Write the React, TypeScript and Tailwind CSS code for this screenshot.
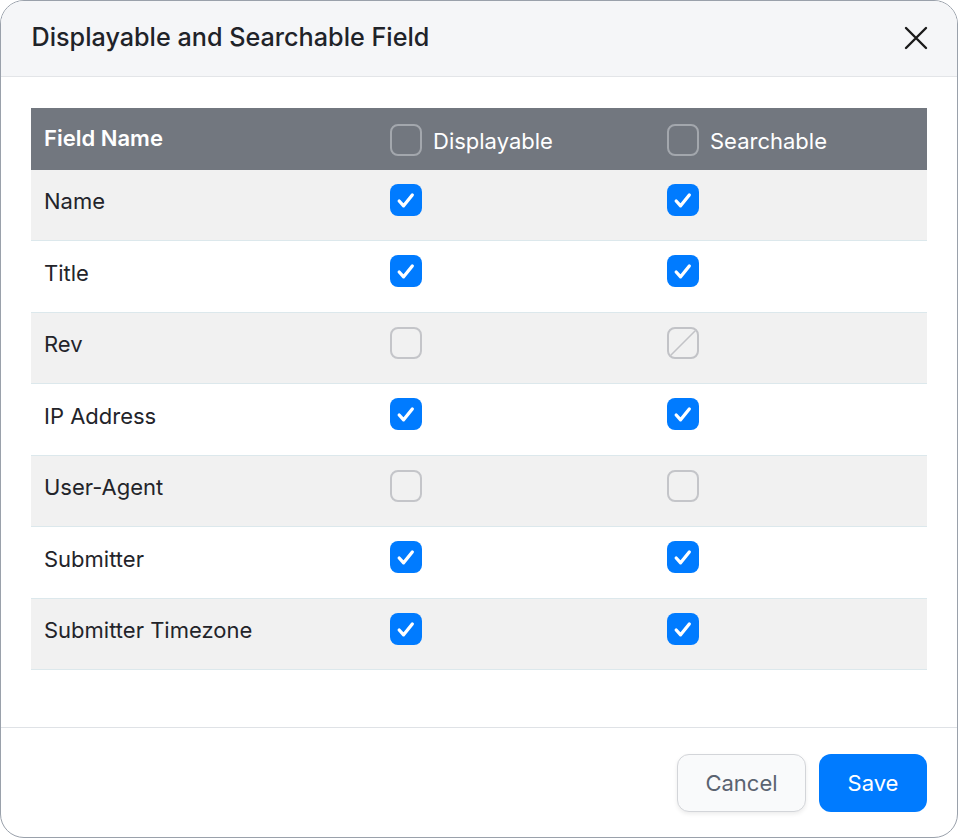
import React from "react";

type State = "on" | "off" | "disabled";

const rows: { name: string; d: State; s: State }[] = [
  { name: "Name", d: "on", s: "on" },
  { name: "Title", d: "on", s: "on" },
  { name: "Rev", d: "off", s: "disabled" },
  { name: "IP Address", d: "on", s: "on" },
  { name: "User-Agent", d: "off", s: "off" },
  { name: "Submitter", d: "on", s: "on" },
  { name: "Submitter Timezone", d: "on", s: "on" },
];

function Box({ state }: { state: State }) {
  if (state === "on") {
    return (
      <div className="w-[32px] h-[32px] rounded-[8px] bg-[#007bff] shrink-0">
        <svg width="32" height="32" viewBox="0 0 32 32" fill="none">
          <path d="M9.2 17 L13.6 21.8 L22.3 11" stroke="white" strokeWidth="3.3" strokeLinecap="round" strokeLinejoin="round" />
        </svg>
      </div>
    );
  }
  if (state === "disabled") {
    return (
      <div className="w-[32px] h-[32px] rounded-[8px] border-[2px] border-[#c2c3c7] shrink-0 overflow-hidden">
        <svg width="28" height="28" viewBox="0 0 28 28" fill="none">
          <line x1="1" y1="27" x2="27" y2="1" stroke="#c2c3c7" strokeWidth="1.6" />
        </svg>
      </div>
    );
  }
  return <div className="w-[32px] h-[32px] rounded-[8px] border-[2px] border-[#c4c5c9] shrink-0" />;
}

export default function App() {
  return (
    <div
      className="w-[958px] h-[838px] border border-[#9aa1ab] rounded-[24px] overflow-hidden flex flex-col bg-white"
      style={{ fontFamily: "Inter, 'Noto Sans', sans-serif" }}
    >
      <div className="h-[76px] shrink-0 bg-[#f5f6f8] border-b border-[#e3e5e8] pl-[30.5px] pr-[29px] flex items-center justify-between">
        <div className="text-[25.2px] font-medium text-[#1f2329] pb-[1px]">Displayable and Searchable Field</div>
        <svg className="mb-[2px]" width="24" height="24" viewBox="0 0 24 24" fill="none">
          <path d="M2 2 L22 22 M22 2 L2 22" stroke="#1a1a1a" strokeWidth="2.4" strokeLinecap="round" />
        </svg>
      </div>

      <div className="flex-1 px-[30px] pt-[31px]">
        <div className="w-[896px]">
          <div className="h-[61.5px] bg-[#72777f] grid grid-cols-[346px_277px_1fr] text-white">
            <div className="pl-[13px] flex items-center text-[22px] font-semibold">Field Name</div>
            <div className="pl-[13px] flex items-center pt-[2px] gap-[11px]">
              <div className="w-[32px] h-[32px] rounded-[8px] border-[2px] border-[#a3a7ad] shrink-0" />
              <span className="text-[22px] pt-[3px]">Displayable</span>
            </div>
            <div className="pl-[13px] flex items-center pt-[2px] gap-[11px]">
              <div className="w-[32px] h-[32px] rounded-[8px] border-[2px] border-[#a3a7ad] shrink-0" />
              <span className="text-[22px] pt-[3px]">Searchable</span>
            </div>
          </div>
          {rows.map((r, i) => (
            <div
              key={r.name}
              className={
                "h-[71.5px] grid grid-cols-[346px_277px_1fr] border-b border-[#dce8ec] " +
                (i % 2 === 0 ? "bg-[#f1f1f1]" : "bg-white")
              }
            >
              <div className="pl-[13px] pt-[14px]">
                <div className="h-[32px] flex items-center pt-[4px] text-[22px] text-[#23242a]">{r.name}</div>
              </div>
              <div className="pl-[13px] pt-[14px]">
                <Box state={r.d} />
              </div>
              <div className="pl-[13px] pt-[14px]">
                <Box state={r.s} />
              </div>
            </div>
          ))}
        </div>
      </div>

      <div className="shrink-0 border-t border-[#dfe2e6] pt-[26px] pb-[25px] px-[30px] flex justify-end gap-[13px]">
        <button className="w-[129px] h-[58px] rounded-[12px] bg-[#f9fafb] border border-[#d3d5d9] shadow-[0_2px_4px_rgba(0,0,0,0.08)] text-[22px] text-[#5b6370]">
          Cancel
        </button>
        <button className="w-[108px] h-[58px] rounded-[12px] bg-[#007bff] text-[22px] text-white">Save</button>
      </div>
    </div>
  );
}
